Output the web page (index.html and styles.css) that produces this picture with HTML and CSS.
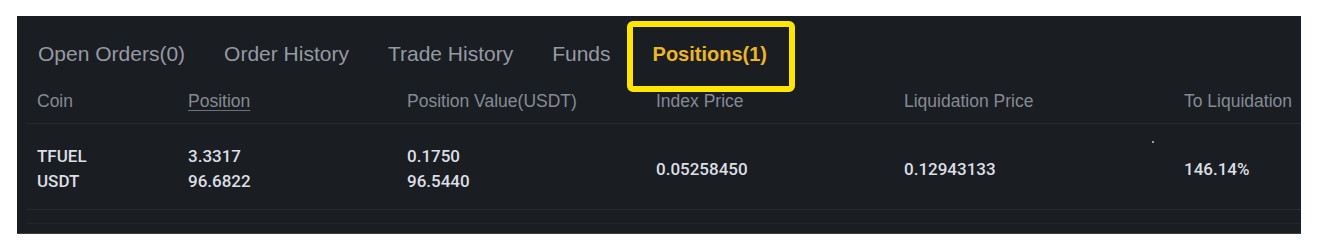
FILE: index.html
```html
<!DOCTYPE html>
<html lang="en">
<head>
<meta charset="utf-8">
<title>Positions</title>
<link rel="stylesheet" href="styles.css">
</head>
<body>
<div class="panel">
  <nav class="tabs">
    <span class="tab">Open Orders(0)</span>
    <span class="tab">Order History</span>
    <span class="tab">Trade History</span>
    <span class="tab">Funds</span>
    <span class="tab active">Positions(1)</span>
  </nav>
  <div class="table">
    <div class="row head">
      <span>Coin</span>
      <span class="ul">Position</span>
      <span>Position Value(USDT)</span>
      <span>Index Price</span>
      <span>Liquidation Price</span>
      <span class="nowrap">To Liquidation</span>
    </div>
    <div class="row body">
      <span class="cell"><span>TFUEL</span><span>USDT</span></span>
      <span class="cell"><span>3.3317</span><span>96.6822</span></span>
      <span class="cell"><span>0.1750</span><span>96.5440</span></span>
      <span class="cell"><span>0.05258450</span></span>
      <span class="cell"><span>0.12943133</span></span>
      <span class="cell"><span>146.14%</span></span>
      <i class="speck"></i>
    </div>
    <div class="foot"></div>
  </div>
</div>
</body>
</html>
```
FILE: styles.css
```css
html, body {
  margin: 0;
  padding: 0;
  background: #ffffff;
}
body {
  font-family: "Liberation Sans", Arial, sans-serif;
}
.panel {
  margin: 16px 0 0 17px;
  width: 1284px;
  height: 218px;
  background: #1a1d22;
  overflow: hidden;
  padding-left: 20px;
  box-sizing: border-box;
  box-shadow: inset 0 -1px 0 #3a3d43;
}
.tabs {
  display: flex;
  align-items: center;
  gap: 39px;
  padding: 24px 0 11px 1px;
  height: 28px;
  font-size: 21px;
  line-height: 28px;
  color: #959aa2;
}
.tab {
  position: relative;
  white-space: nowrap;
}
.tab.active {
  color: #eab529;
  font-size: 20px;
  font-weight: 700;
  margin-left: 3px;
}
.tab.active::after {
  content: "";
  position: absolute;
  left: -26px;
  right: -28px;
  top: -19px;
  bottom: -24px;
  border: 6px solid #ffe500;
  border-radius: 6px;
}
.table {
  position: relative;
  margin-left: -10px;
}
.row {
  display: grid;
  grid-template-columns: 151px 219px 249px 248px 280px 1fr;
  padding-left: 10px;
  border-bottom: 1px solid #262a31;
}
.head {
  height: 44px;
  align-items: center;
  font-size: 17.5px;
  color: #858b94;
}
.ul {
  text-decoration: underline;
  text-underline-offset: 3px;
  text-decoration-color: #6c717a;
}
.nowrap {
  white-space: nowrap;
}
.body {
  position: relative;
  padding-top: 20px;
  padding-bottom: 15px;
  align-items: center;
  font-family: Roboto, "Liberation Sans", Arial, sans-serif;
  font-size: 17px;
  font-weight: 500;
  color: #dcdfe4;
}
.cell {
  display: flex;
  flex-direction: column;
  line-height: 25px;
}
.speck {
  position: absolute;
  left: 1125px;
  top: 17px;
  width: 2px;
  height: 2px;
  background: #9aa0a8;
}
.foot {
  height: 13px;
  border-bottom: 1px solid #23262c;
}
```
